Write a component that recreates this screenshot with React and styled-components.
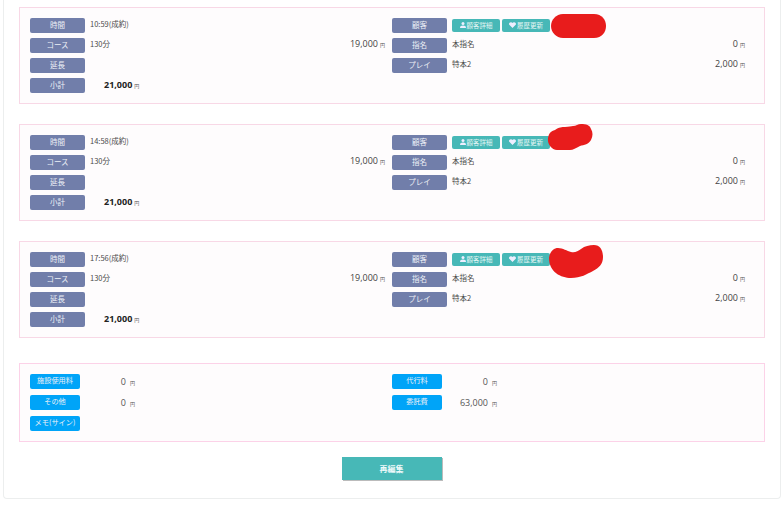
import React from "react";
import styled, { createGlobalStyle } from "styled-components";

const Global = createGlobalStyle`
  html, body { margin: 0; padding: 0; background: #fff; }
  body { font-family: "Noto Sans", "Noto Sans CJK JP", sans-serif; color: #444; }
`;
const Page = styled.div`
  width: 781px; height: 525px; box-sizing: border-box; padding: 0 1px 26px 3px; display: flex;
`;
const Panel = styled.div`
  flex: 1; box-sizing: border-box; border: 1px solid #eceeee; border-top: 0; border-radius: 0 0 4px 4px;
  padding: 7px 15px 0; display: flex; flex-direction: column;
`;
const Card = styled.div`
  position: relative; box-sizing: border-box; height: ${p => p.$h}px; width: 746px;
  margin-top: ${p => p.$mt}px; margin-bottom: ${p => p.$mb}px; background: #fefcfd;
  border: 1px solid ${p => p.$line};
  padding: 10px 10px 0; display: grid; grid-template-columns: 355px 353px; column-gap: 7px; align-content: start;
`;
const Col = styled.div`display: flex; flex-direction: column; gap: ${p => p.$gap}px;`;
const Row = styled.div`display: flex; align-items: center; height: 15px;`;
const Label = styled.div`
  flex: none; width: ${p => p.$w}px; height: 15px; border-radius: 2px; background: ${p => p.$bg};
  color: #eef1f7; font: 400 ${p => p.$fs}px/13px "Noto Sans CJK JP", sans-serif; text-align: center; white-space: nowrap;
`;
const Text = styled.span`
  margin: 0 0 4px 5px; font: 7.5px/12px "Noto Sans CJK JP", sans-serif; color: #4a4a4a; white-space: nowrap;
`;
const Amount = styled.span`
  margin: 0 0 3px auto; font: 9px/12px "Open Sans", sans-serif; color: #444; white-space: nowrap;
  display: flex; align-items: baseline; gap: 2px;
`;
const Yen = styled.small`font: 5px/8px "Noto Sans CJK JP", sans-serif; color: #555;`;
const Sum = styled.span`
  margin: 0 0 2px 19px; font: 700 9px/12px "Open Sans", sans-serif; color: #222; display: flex; align-items: baseline; gap: 2px;
`;
const AmountRight = styled.span`
  width: ${p => p.$w}px; text-align: right; font: 9px/12px "Open Sans", sans-serif; color: #555; white-space: nowrap;
`;
const FeeYen = styled(Yen)`margin-left: 4px; margin-top: 2px;`;
const SmallBtn = styled.button`
  flex: none; width: 48px; height: 13px; margin: 0 2px 0 ${p => p.$ml}px; padding: 0 0 1px; border: 0; border-radius: 2px;
  background: #47b8b7; color: #e3f5f4; font: 400 6.5px/12px "Noto Sans CJK JP", sans-serif;
  display: flex; align-items: center; justify-content: center; gap: 1px;
`;
const Blob = styled.svg`position: absolute; left: ${p => p.$x}px; top: ${p => p.$y}px; overflow: visible;`;
const Footer = styled.div`display: flex; justify-content: center; padding-right: 1px;`;
const Edit = styled.button`
  width: 100px; height: 23px; margin-top: 15px; border: 0; border-radius: 0; background: #47b8b7;
  box-shadow: 1px 1px 0 #bbb; color: #eefafa; font: 700 8px/23px "Noto Sans CJK JP", sans-serif; padding: 0;
`;

const User = () => (
  <svg width="6" height="6" viewBox="0 0 6 6" fill="#eef"><circle cx="3" cy="1.6" r="1.5" /><path d="M0 6c0-2 1.2-2.600 3-2.600S6 4 6 6z" /></svg>
);
const Heart = () => (
  <svg width="7" height="6" viewBox="0 0 7 6" fill="#eef"><path d="M3.500 6 .3 2.800C-.6 1.400.8 0 2 .2c.7 0 1.200.4 1.500.9C3.800.6 4.300.2 5 .2c1.200-.2 2.600 1.200 1.700 2.600z" /></svg>
);

const items = [
  { time: "10:59(成約)", x: 531, y: 6, w: 55, h: 24, d: "M12 0H43C51 0 55 6 55 12S51 24 43 24H12C5 24 0 18 0 12S5 0 12 0Z" },
  { time: "14:58(成約)", x: 528, y: -1, w: 45, h: 26, d: "M0 14C1 9 3 7 7 6C11 3 14 3 17 3C21 3 23 2 25 2C28 2 30 0 33 0C38 0 42 1 43 5C45 8 45 12 43 16C41 20 36 21 32 22C28 24 25 26 22 26H9C4 26 -1 20 0 14Z" },
  { time: "17:56(成約)", x: 529, y: 3, w: 54, h: 33, d: "M0 13C1 6 5 3 9 3C14 3 18 6 22 7C26 8 29 6 32 4C36 1 40 0 45 0C51 0 54 5 54 12C54 19 50 23 44 26C38 29 32 33 22 33C12 33 0 27 0 13Z" },
];

const Item = ({ item }) => (
  <Card $h={97} $mt={0} $mb={20} $line="#f8d8e6">
    <Col $gap={5}>
      <Row><Label $w={55} $fs={7.5} $bg="#717eaa">時間</Label><Text>{item.time}</Text></Row>
      <Row><Label $w={55} $fs={7.5} $bg="#717eaa">コース</Label><Text>130分</Text><Amount>19,000<Yen>円</Yen></Amount></Row>
      <Row><Label $w={55} $fs={7.5} $bg="#717eaa">延長</Label></Row>
      <Row><Label $w={55} $fs={7.5} $bg="#717eaa">小計</Label><Sum>21,000<Yen>円</Yen></Sum></Row>
    </Col>
    <Col $gap={5}>
      <Row>
        <Label $w={55} $fs={7.5} $bg="#717eaa">顧客</Label>
        <SmallBtn $ml={5}><User />顧客詳細</SmallBtn>
        <SmallBtn $ml={0}><Heart />履歴更新</SmallBtn>
      </Row>
      <Row><Label $w={55} $fs={7.5} $bg="#717eaa">指名</Label><Text>本指名</Text><Amount>0<Yen>円</Yen></Amount></Row>
      <Row><Label $w={55} $fs={7.5} $bg="#717eaa">プレイ</Label><Text>特本2</Text><Amount>2,000<Yen>円</Yen></Amount></Row>
    </Col>
    <Blob $x={item.x} $y={item.y} width={item.w} height={item.h}><path d={item.d} fill="#e81c1c" /></Blob>
  </Card>
);

export default function App() {
  return (
    <Page>
      <Global />
      <Panel>
        {items.map(item => (
          <Item key={item.time} item={item} />
        ))}
        <Card $h={79} $mt={5} $mb={0} $line="#fcd2e8">
          <Col $gap={6}>
            <Row><Label $w={50} $fs={7.2} $bg="#00a4f8">施設使用料</Label><AmountRight $w={46}>0</AmountRight><FeeYen>円</FeeYen></Row>
            <Row><Label $w={50} $fs={7.2} $bg="#00a4f8">その他</Label><AmountRight $w={46}>0</AmountRight><FeeYen>円</FeeYen></Row>
            <Row><Label $w={50} $fs={7.2} $bg="#00a4f8">メモ(サイン)</Label></Row>
          </Col>
          <Col $gap={6}>
            <Row><Label $w={50} $fs={7.2} $bg="#00a4f8">代行料</Label><AmountRight $w={46}>0</AmountRight><FeeYen>円</FeeYen></Row>
            <Row><Label $w={50} $fs={7.2} $bg="#00a4f8">委託費</Label><AmountRight $w={46}>63,000</AmountRight><FeeYen>円</FeeYen></Row>
          </Col>
        </Card>
        <Footer><Edit>再編集</Edit></Footer>
      </Panel>
    </Page>
  );
}
